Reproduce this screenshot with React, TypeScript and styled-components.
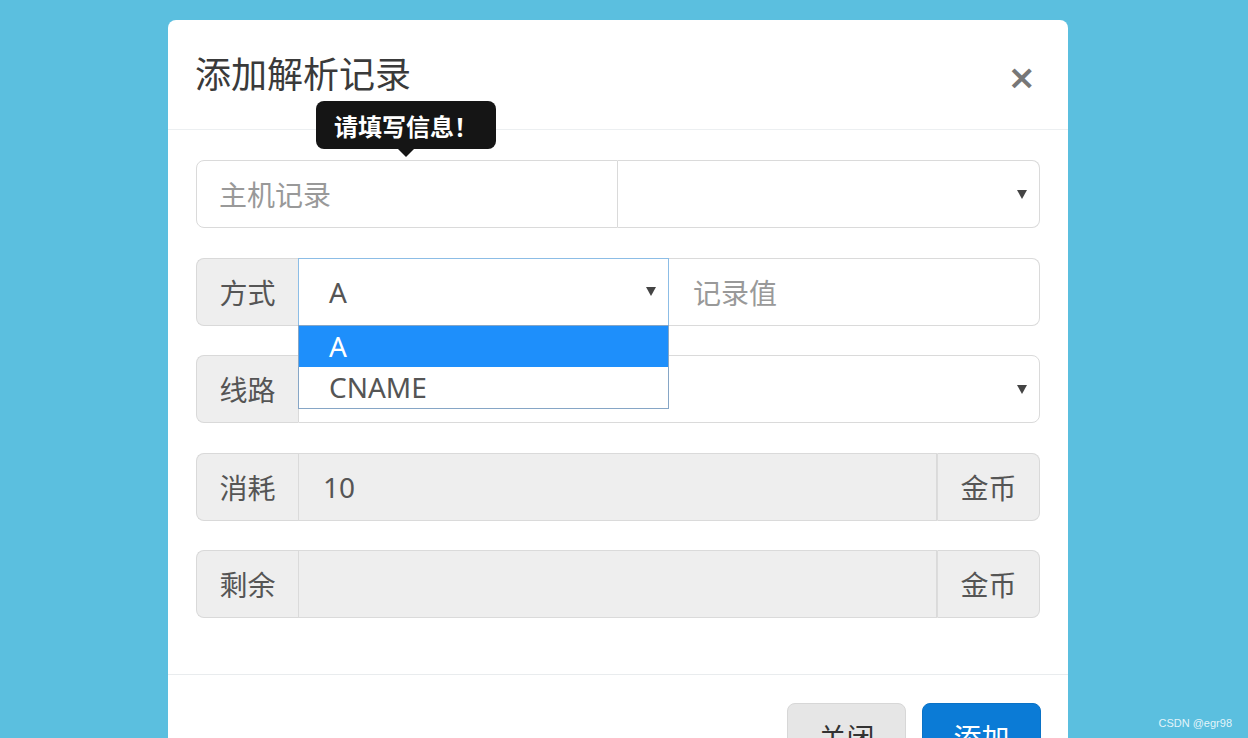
import styled, { createGlobalStyle } from "styled-components";

const GlobalStyle = createGlobalStyle`
  html, body {
    margin: 0;
    padding: 0;
    height: 738px;
    overflow: hidden;
    background: #5bbfdf;
  }
  body {
    font-family: "Noto Sans", "Noto Sans CJK SC", sans-serif;
    color: #555;
  }
  * {
    box-sizing: border-box;
  }
`;

const Page = styled.div`
  padding: 20px 0 0 168px;
  height: 738px;
  position: relative;
`;

const Modal = styled.div`
  width: 900px;
  background: #fff;
  border-radius: 8px;
`;

const Header = styled.div`
  display: flex;
  align-items: center;
  justify-content: space-between;
  padding: 29px 32px 29px 27px;
  border-bottom: 1px solid #eceff1;
`;

const Title = styled.h4`
  margin: 0;
  font-size: 36px;
  line-height: 51px;
  font-weight: 400;
  color: #3a3a3a;
`;

const CloseX = styled.span`
  font-family: "DejaVu Sans", sans-serif;
  font-size: 34px;
  font-weight: 700;
  line-height: 34px;
  color: #777;
  cursor: pointer;
  margin-top: 4px;
`;

const Body = styled.div`
  padding: 30px 28px 26px 28px;
`;

const FormGroup = styled.div`
  margin-bottom: 29.5px;
  height: 68px;
  display: flex;
  position: relative;
`;

const Cell = styled.div<{ $width?: number }>`
  position: relative;
  display: flex;
  ${(p) => (p.$width ? `width: ${p.$width}px; flex: none;` : "flex: 1;")}
`;

const Addon = styled.div<{ $side: "left" | "right" }>`
  flex: none;
  width: ${(p) => (p.$side === "left" ? 102 : 103)}px;
  display: flex;
  align-items: center;
  justify-content: center;
  background: #eeeeee;
  border: 1px solid #d9d9d9;
  color: #555;
  font-size: 28px;
  ${(p) =>
    p.$side === "left"
      ? "border-radius: 8px 0 0 8px; border-right: none;"
      : "border-radius: 0 8px 8px 0; border-left: 1px solid #dcdcdc;"}
`;

const Field = styled.div<{
  $left?: boolean;
  $right?: boolean;
  $disabled?: boolean;
  $focused?: boolean;
  $joined?: boolean;
}>`
  flex: 1;
  display: flex;
  align-items: center;
  height: 68px;
  padding: 0 22px;
  font-size: 28px;
  color: #555;
  background: ${(p) => (p.$disabled ? "#eeeeee" : "#fff")};
  border: 1px solid ${(p) => (p.$focused ? "#8cbde6" : "#dadada")};
  ${(p) => (p.$joined ? "border-left: none;" : "")}
  border-radius: ${(p) =>
    `${p.$left ? 8 : 0}px ${p.$right ? 8 : 0}px ${p.$right ? 8 : 0}px ${p.$left ? 8 : 0}px`};
  ${(p) => (p.$focused ? "position: relative; z-index: 1;" : "")}
`;

const Placeholder = styled.span`
  color: #999;
`;

const Value = styled.span<{ $pad?: number }>`
  padding-left: ${(p) => p.$pad ?? 0}px;
`;

const Caret = styled.span`
  margin-left: auto;
  margin-right: -10px;
  width: 0;
  height: 0;
  border-left: 5px solid transparent;
  border-right: 5px solid transparent;
  border-top: 9px solid #444;
`;

const Dropdown = styled.ul`
  position: absolute;
  top: 67px;
  left: 0;
  right: 0;
  margin: 0;
  padding: 0;
  list-style: none;
  background: #fff;
  border: 1px solid #86a6c6;
  z-index: 3;
`;

const Option = styled.li<{ $active?: boolean }>`
  height: 41px;
  line-height: 41px;
  padding-left: 30px;
  font-size: 28px;
  color: ${(p) => (p.$active ? "#fff" : "#555")};
  background: ${(p) => (p.$active ? "#1e8ffb" : "#fff")};
`;

const Tooltip = styled.div`
  position: absolute;
  left: 120px;
  bottom: 79px;
  width: 180px;
  height: 48px;
  display: flex;
  align-items: center;
  justify-content: center;
  background: #151515;
  border-radius: 8px;
  color: #fff;
  font-size: 24px;
  font-weight: 700;
  z-index: 4;
  &::after {
    content: "";
    position: absolute;
    left: 82px;
    top: 48px;
    border-left: 8px solid transparent;
    border-right: 8px solid transparent;
    border-top: 8px solid #151515;
  }
`;

const Footer = styled.div`
  display: flex;
  justify-content: flex-end;
  gap: 16px;
  padding: 28px 27px;
  border-top: 1px solid #e9ecee;
`;

const Button = styled.button<{ $primary?: boolean }>`
  width: 119px;
  height: 68px;
  border: 1px solid ${(p) => (p.$primary ? "#0a72c6" : "#d7d7d7")};
  border-radius: 8px;
  font-family: inherit;
  font-size: 28px;
  color: ${(p) => (p.$primary ? "#fff" : "#333")};
  background: ${(p) => (p.$primary ? "#0b7bd6" : "#e6e6e6")};
`;

const Watermark = styled.div`
  position: absolute;
  right: 16px;
  bottom: 9px;
  font-family: "Liberation Sans", sans-serif;
  font-size: 11px;
  color: rgba(255, 255, 255, 0.85);
`;

export default function App() {
  return (
    <>
      <GlobalStyle />
      <Page>
        <Modal>
          <Header>
            <Title>添加解析记录</Title>
            <CloseX>×</CloseX>
          </Header>
          <Body>
            <FormGroup>
              <Cell $width={422}>
                <Tooltip>请填写信息！</Tooltip>
                <Field $left>
                  <Placeholder>主机记录</Placeholder>
                </Field>
              </Cell>
              <Cell>
                <Field $right $joined>
                  <Caret />
                </Field>
              </Cell>
            </FormGroup>

            <FormGroup>
              <Addon $side="left">方式</Addon>
              <Cell $width={371}>
                <Field $focused>
                  <Value $pad={8}>A</Value>
                  <Caret />
                </Field>
                <Dropdown>
                  <Option $active>A</Option>
                  <Option>CNAME</Option>
                </Dropdown>
              </Cell>
              <Cell>
                <Field $right $joined>
                  <Value $pad={2}>
                    <Placeholder>记录值</Placeholder>
                  </Value>
                </Field>
              </Cell>
            </FormGroup>

            <FormGroup>
              <Addon $side="left">线路</Addon>
              <Field $right>
                <Caret />
              </Field>
            </FormGroup>

            <FormGroup>
              <Addon $side="left">消耗</Addon>
              <Field $disabled>
                <Value $pad={2}>10</Value>
              </Field>
              <Addon $side="right">金币</Addon>
            </FormGroup>

            <FormGroup>
              <Addon $side="left">剩余</Addon>
              <Field $disabled />
              <Addon $side="right">金币</Addon>
            </FormGroup>
          </Body>
          <Footer>
            <Button>关闭</Button>
            <Button $primary>添加</Button>
          </Footer>
        </Modal>
        <Watermark>CSDN @egr98</Watermark>
      </Page>
    </>
  );
}
